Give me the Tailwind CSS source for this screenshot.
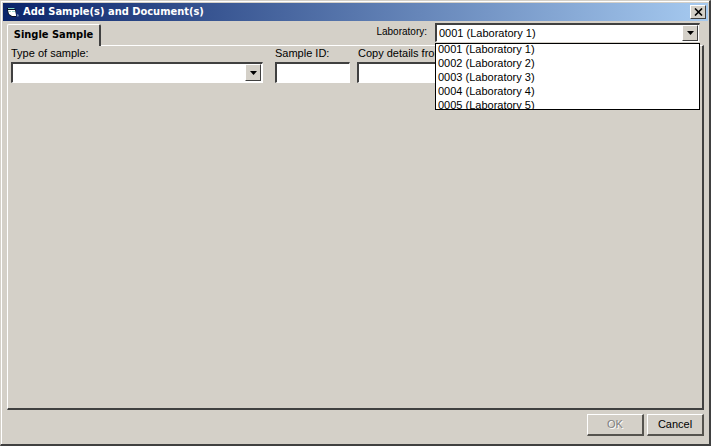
<!DOCTYPE html>
<html lang="en">
  <head>
    <meta charset="UTF-8" />
    <meta name="viewport" content="width=device-width, initial-scale=1.0" />
    <script src="https://cdn.jsdelivr.net/npm/@tailwindcss/browser@4"></script>
    <title>Add Sample(s) and Document(s)</title>
  </head>

  <body class="bg-[#d4d0c8] text-black text-[11px] leading-[14px] font-['Liberation_Sans',Arial,sans-serif]">
    <div class="min-h-screen flex flex-col border-t border-l border-r-2 border-b-2 border-t-[#d4d0c8] border-l-[#d4d0c8] border-r-[#404040] border-b-[#404040]">
      <div class="grow flex flex-col border-t border-l border-white pt-px pl-px pr-px">
        <!-- title bar -->
        <header class="h-[18px] flex items-center pl-1 pr-[2px] bg-linear-to-r/srgb from-[#0a246a] to-[#a6caf0]">
          <svg class="w-[13px] h-[12px] mr-[3px]" viewBox="0 0 13 12">
            <path d="M0 2h7l2 2v7H5L1 8z" fill="#0b1020" />
            <path d="M1 2h6l1 1H1z" fill="#7fd0c8" />
            <path d="M1 4h7l1 5v1H5L2 8z" fill="#fff" />
            <path d="M2 5h2v1H2zM5 5h3v1H5z" fill="#9fd8d0" />
            <path d="M10 8l2 1-1 2-1-1z" fill="#6f86ad" />
          </svg>
          <h1 class="grow text-white font-bold font-['DejaVu_Sans_Condensed','DejaVu_Sans',sans-serif]">Add Sample(s) and Document(s)</h1>
          <button type="button" aria-label="Close" class="w-4 h-[14px] flex items-center justify-center bg-[#d4d0c8] border border-t-white border-l-white border-r-[#404040] border-b-[#404040]">
            <svg class="w-[9px] h-[8px]" viewBox="0 0 9 8">
              <path d="M1 .5l7 7M8 .5l-7 7" stroke="#000" stroke-width="1.6" />
            </svg>
          </button>
        </header>

        <main class="grow flex flex-col px-1">
          <!-- tab and laboratory picker -->
          <div class="flex items-start justify-between pt-[2px]">
            <div role="tablist" class="relative z-10 -mb-px pt-px">
              <button type="button" role="tab" aria-selected="true" class="block h-[22px] w-[94px] pb-[2px] bg-[#d4d0c8] border-t border-l border-r-2 border-t-white border-l-white border-r-[#404040] rounded-t-[2px] font-bold font-['DejaVu_Sans_Condensed','DejaVu_Sans',sans-serif]">Single Sample</button>
            </div>
            <div class="flex items-start pr-1">
              <label for="laboratory" class="pt-[2px] mr-2 text-[10px]">Laboratory:</label>
              <div class="relative w-[265px]">
                <select id="laboratory" class="block appearance-none w-full h-[19px] mb-px pl-[2px] bg-white border-t-2 border-l-2 border-r border-b border-t-[#404040] border-l-[#404040] border-r-[#d4d0c8] border-b-white">
                  <option>0001 (Laboratory 1)</option>
                  <option>0002 (Laboratory 2)</option>
                  <option>0003 (Laboratory 3)</option>
                  <option>0004 (Laboratory 4)</option>
                  <option>0005 (Laboratory 5)</option>
                </select>
                <span class="absolute top-[2px] right-[2px] bottom-[2px] w-4 flex items-center justify-center pointer-events-none bg-[#d4d0c8] border border-t-white border-l-white border-r-[#404040] border-b-[#404040]">
                  <svg class="w-[7px] h-1" viewBox="0 0 7 4"><path d="M0 0h7L3.5 4z" /></svg>
                </span>
                <ul role="listbox" class="absolute z-20 top-full left-0 w-full h-[67px] flex flex-col justify-center overflow-hidden bg-white border border-black pl-[2px]">
                  <li role="option" aria-selected="true" class="shrink-0">0001 (Laboratory 1)</li>
                  <li role="option" class="shrink-0">0002 (Laboratory 2)</li>
                  <li role="option" class="shrink-0">0003 (Laboratory 3)</li>
                  <li role="option" class="shrink-0">0004 (Laboratory 4)</li>
                  <li role="option" class="shrink-0">0005 (Laboratory 5)</li>
                </ul>
              </div>
            </div>
          </div>

          <!-- tab page -->
          <section role="tabpanel" class="grow flex items-start border-t border-l border-r-2 border-b-2 border-t-white border-l-white border-r-[#404040] border-b-[#404040] pl-[3px]">
            <div class="w-[252px] mr-3">
              <label for="type" class="block h-4">Type of sample:</label>
              <div class="relative">
                <select id="type" class="block appearance-none w-full h-[21px] pl-1 bg-white border-t-2 border-l-2 border-r border-b border-t-[#404040] border-l-[#404040] border-r-white border-b-white">
                  <option></option>
                </select>
                <span class="absolute top-[2px] right-[2px] bottom-[2px] w-4 flex items-center justify-center pointer-events-none bg-[#d4d0c8] border border-t-white border-l-white border-r-[#404040] border-b-[#404040]">
                  <svg class="w-[7px] h-1" viewBox="0 0 7 4"><path d="M0 0h7L3.5 4z" /></svg>
                </span>
              </div>
            </div>
            <div class="w-[75px] mr-[7px]">
              <label for="sample-id" class="block h-4">Sample ID:</label>
              <input id="sample-id" type="text" class="block w-full h-[21px] px-1 bg-white border-t-2 border-l-2 border-r border-b border-t-[#404040] border-l-[#404040] border-r-white border-b-white" />
            </div>
            <div class="w-[200px]">
              <label for="copy-from" class="block h-4 pl-px whitespace-nowrap">Copy details from:</label>
              <input id="copy-from" type="text" class="block w-full h-[21px] px-1 bg-white border-t-2 border-l-2 border-r border-b border-t-[#404040] border-l-[#404040] border-r-white border-b-white" />
            </div>
          </section>

          <!-- dialog buttons -->
          <footer class="flex justify-end gap-[3px] pt-1 pb-2">
            <button type="button" disabled class="w-[57px] h-[22px] pb-px border-t border-l border-r-2 border-b-2 border-t-white border-l-white border-r-[#55534e] border-b-[#55534e] text-[#808080] [text-shadow:1px_1px_0_#fff]">OK</button>
            <button type="button" class="w-[57px] h-[22px] pb-px border-t border-l border-r-2 border-b-2 border-t-white border-l-white border-r-[#55534e] border-b-[#55534e]">Cancel</button>
          </footer>
        </main>
      </div>
    </div>
  </body>
</html>
